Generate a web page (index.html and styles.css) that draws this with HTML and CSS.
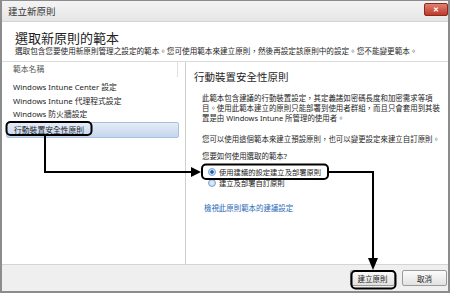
FILE: index.html
```html
<!DOCTYPE html>
<html>
<head>
    <title>建立新原則</title>
    <link rel="stylesheet" href="styles.css">
</head>
<body>

<div class="window">
    <div class="titlebar">
        <span class="title">建立新原則</span>
        <span class="close">&#10005;</span>
    </div>

    <div class="content">
        <h1 class="heading">選取新原則的範本</h1>
        <p class="desc">選取包含您要使用新原則管理之設定的範本。您可使用範本來建立原則，然後再設定該原則中的設定。您不能變更範本。</p>

        <div class="panes">
            <div class="list">
                <div class="list-head">範本名稱</div>
                <div class="item">Windows Intune Center 設定</div>
                <div class="item">Windows Intune 代理程式設定</div>
                <div class="item">Windows 防火牆設定</div>
                <div class="item selected">行動裝置安全性原則</div>
            </div>

            <div class="detail">
                <h2 class="detail-title">行動裝置安全性原則</h2>
                <p class="para">此範本包含建議的行動裝置設定，其定義諸如密碼長度和加密需求等項目。使用此範本建立的原則只能部署到使用者群組，而且只會套用到其裝置是由 Windows Intune 所管理的使用者。</p>
                <p class="para para-last">您可以使用這個範本來建立預設原則，也可以變更設定來建立自訂原則。</p>
                <div class="question">您要如何使用選取的範本?</div>
                <label class="radio"><span class="dot checked"></span>使用建議的設定建立及部署原則</label>
                <label class="radio"><span class="dot"></span>建立及部署自訂原則</label>
                <a class="link">檢視此原則範本的建議設定</a>
            </div>
        </div>
    </div>

    <div class="footer">
        <button class="btn">建立原則</button>
        <button class="btn">取消</button>
    </div>

    <svg class="marks" width="450" height="293" viewBox="0 0 450 293">
        <rect x="6.5" y="122" width="85" height="13" rx="4" fill="none" stroke="#000" stroke-width="2"/>
        <path d="M45 135 V172 H192" fill="none" stroke="#000" stroke-width="2"/>
        <polygon points="191,167 201,172 191,177" fill="#000"/>
        <rect x="202" y="164.5" width="126" height="14.5" rx="4" fill="none" stroke="#000" stroke-width="2"/>
        <path d="M328 172 H373 V259" fill="none" stroke="#000" stroke-width="2"/>
        <polygon points="368,258 373,270 378,258" fill="#000"/>
        <rect x="351.5" y="271" width="44" height="17.5" rx="4" fill="none" stroke="#000" stroke-width="2"/>
    </svg>
</div>

</body>
</html>
```

FILE: styles.css
```css
body {
  margin: 0;
  padding: 0;
  font-family: "Noto Sans", "Noto Sans CJK TC", sans-serif;
  color: #1e1e1e;
}

.window {
  position: relative;
  width: 450px;
  height: 293px;
  box-sizing: border-box;
  border: 1px solid #8c8c8c;
  border-width: 1px 2px 2px 2px;
  display: flex;
  flex-direction: column;
  background: #fff;
  overflow: hidden;
}

.titlebar {
  height: 20px;
  display: flex;
  align-items: center;
  justify-content: space-between;
  padding: 0 0 0 6px;
  background: linear-gradient(#f4f4f4, #e6e6e6);
  border-bottom: 1px solid #d4d4d4;
  flex-shrink: 0;
}

.title {
  font-size: 9.5px;
  color: #333;
}

.close {
  width: 22px;
  height: 11px;
  margin-top: -3px;
  background: linear-gradient(#e08070, #c0392b);
  border: 1px solid #8b2a20;
  border-radius: 2px;
  color: #fff;
  font-size: 7px;
  font-weight: bold;
  line-height: 11px;
  text-align: center;
}

.content {
  flex: 1;
  display: flex;
  flex-direction: column;
  min-height: 0;
}

.heading {
  margin: 8px 0 0 13px;
  font-size: 13px;
  font-weight: normal;
  line-height: 17px;
  color: #222;
}

.desc {
  margin: -1px 0 0 13px;
  font-size: 7.6px;
  line-height: 11px;
  white-space: nowrap;
}

.panes {
  flex: 1;
  margin-top: 4px;
  display: flex;
  border-top: 1px solid #dcdcdc;
}

.list {
  width: 183px;
  border-right: 1px solid #d0d0d0;
  font-size: 7.8px;
}

.list-head {
  height: 15px;
  line-height: 15px;
  padding-left: 11px;
  color: #555;
  border-right: 1px solid #e0e0e0;
  width: 164px;
  margin-bottom: 4px;
}

.item {
  height: 13.5px;
  line-height: 13.5px;
  padding-left: 11px;
}

.item.selected {
  margin: 0 6px 0 4px;
  padding-left: 7px;
  height: 14px;
  line-height: 14px;
  background: linear-gradient(#e4ecf7, #c5d6ee);
  border: 1px solid #a9bfdf;
  border-radius: 2px;
}

.detail {
  flex: 1;
  padding: 6px 1px 0 8px;
  font-size: 7.45px;
}

.detail-title {
  margin: 2px 0 9px 0;
  font-size: 10.5px;
  font-weight: normal;
  line-height: 14px;
}

.para {
  margin: 0 0 11px 8px;
  line-height: 10px;
}

.para-last {
  margin-bottom: 7px;
}

.question {
  margin: 1px 0 5px 8px;
  line-height: 10px;
}

.radio {
  display: flex;
  align-items: center;
  margin-left: 14px;
  height: 11.5px;
  gap: 3px;
  font-size: 7.3px;
}

.dot {
  width: 6px;
  height: 6px;
  border-radius: 50%;
  border: 1px solid #7ea1cc;
  background: radial-gradient(#e6f0fb, #b9d0ea);
}

.dot.checked {
  background: radial-gradient(#1d5fae 35%, #cde0f5 45%);
}

.link {
  display: block;
  margin: 13px 0 0 10px;
  color: #2a6ab8;
}

.footer {
  height: 26px;
  flex-shrink: 0;
  background: #efefef;
  border-top: 1px solid #d4d4d4;
  display: flex;
  justify-content: flex-end;
  align-items: center;
  gap: 7px;
  padding-right: 1px;
}

.btn {
  width: 45px;
  height: 16px;
  padding: 0;
  font-family: "Noto Sans CJK TC", sans-serif;
  font-size: 7.5px;
  color: #222;
  background: linear-gradient(#fbfbfb, #e2e2e2);
  border: 1px solid #9a9a9a;
  border-radius: 2px;
}

.marks {
  position: absolute;
  left: -2px;
  top: -1px;
  pointer-events: none;
}
```
